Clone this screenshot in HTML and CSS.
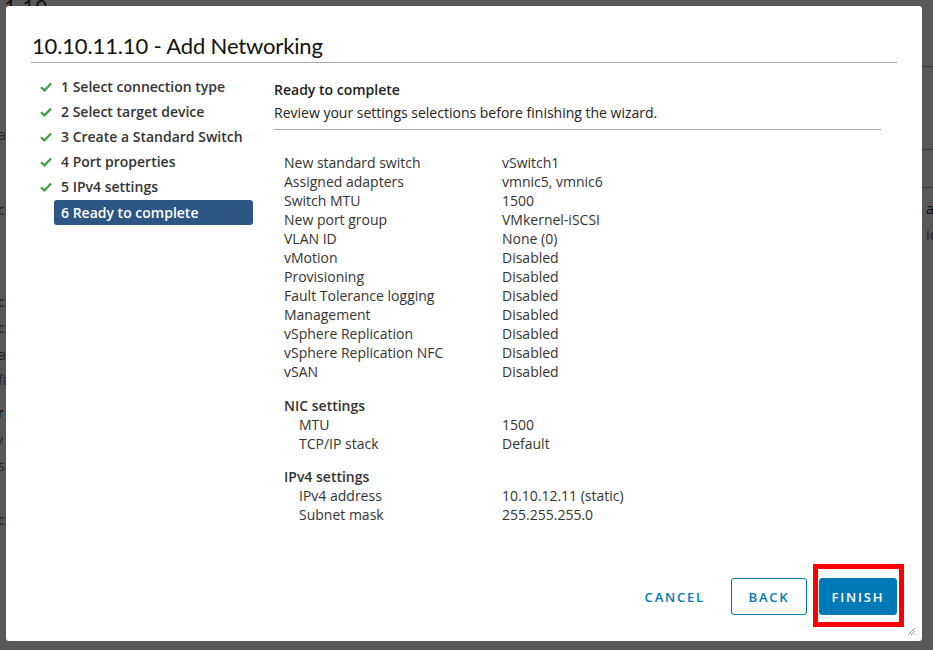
FILE: index.html
```html
<!DOCTYPE html>
<html>
<head>
<meta charset="utf-8">
<link rel="stylesheet" href="styles.css">
</head>
<body>
<div class="page">
  <div class="page-top">1.10</div>
  <div class="page-left">
    <span class="pl" style="top:125px">a</span>
    <span class="pl" style="top:200px">c</span>
    <span class="pl" style="top:292px">c</span>
    <span class="pl" style="top:318px">c</span>
    <span class="pl" style="top:345px">a</span>
    <span class="pl" style="top:370px">fi</span>
    <span class="pl dark" style="top:403px">r</span>
    <span class="pl" style="top:432px">/</span>
    <span class="pl" style="top:456px">s</span>
    <span class="pl" style="top:510px">c</span>
  </div>
  <div class="page-right">
    <div class="pr-line" style="top:66px"></div>
    <div class="pr-line" style="top:149px"></div>
    <div class="pr-line" style="top:187px"></div>
    <span class="pr-text dark" style="top:198px">al</span>
    <span class="pr-text" style="top:224px">ic</span>
  </div>
</div>
<div class="overlay"></div>
<div class="modal">
  <h1 class="title">10.10.11.10 - Add Networking</h1>
  <div class="body">
    <ul class="steps">
      <li class="step done"><svg class="check" viewBox="0 0 12 10"><path d="M1 5.2 L4.4 8.4 L11 1.4" fill="none" stroke="#3c9e3c" stroke-width="2.2"/></svg>1 Select connection type</li>
      <li class="step done"><svg class="check" viewBox="0 0 12 10"><path d="M1 5.2 L4.4 8.4 L11 1.4" fill="none" stroke="#3c9e3c" stroke-width="2.2"/></svg>2 Select target device</li>
      <li class="step done"><svg class="check" viewBox="0 0 12 10"><path d="M1 5.2 L4.4 8.4 L11 1.4" fill="none" stroke="#3c9e3c" stroke-width="2.2"/></svg>3 Create a Standard Switch</li>
      <li class="step done"><svg class="check" viewBox="0 0 12 10"><path d="M1 5.2 L4.4 8.4 L11 1.4" fill="none" stroke="#3c9e3c" stroke-width="2.2"/></svg>4 Port properties</li>
      <li class="step done"><svg class="check" viewBox="0 0 12 10"><path d="M1 5.2 L4.4 8.4 L11 1.4" fill="none" stroke="#3c9e3c" stroke-width="2.2"/></svg>5 IPv4 settings</li>
      <li class="step active">6 Ready to complete</li>
    </ul>
    <div class="content">
      <div class="content-head">
        <div class="heading">Ready to complete</div>
        <div class="desc">Review your settings selections before finishing the wizard.</div>
      </div>
      <div class="summary">
        <div class="row"><span class="k">New standard switch</span><span>vSwitch1</span></div>
        <div class="row"><span class="k">Assigned adapters</span><span>vmnic5, vmnic6</span></div>
        <div class="row"><span class="k">Switch MTU</span><span>1500</span></div>
        <div class="row"><span class="k">New port group</span><span>VMkernel-iSCSI</span></div>
        <div class="row"><span class="k">VLAN ID</span><span>None (0)</span></div>
        <div class="row"><span class="k">vMotion</span><span>Disabled</span></div>
        <div class="row"><span class="k">Provisioning</span><span>Disabled</span></div>
        <div class="row"><span class="k">Fault Tolerance logging</span><span>Disabled</span></div>
        <div class="row"><span class="k">Management</span><span>Disabled</span></div>
        <div class="row"><span class="k">vSphere Replication</span><span>Disabled</span></div>
        <div class="row"><span class="k">vSphere Replication NFC</span><span>Disabled</span></div>
        <div class="row"><span class="k">vSAN</span><span>Disabled</span></div>
        <div class="section">NIC settings</div>
        <div class="row sub"><span class="k">MTU</span><span>1500</span></div>
        <div class="row sub"><span class="k">TCP/IP stack</span><span>Default</span></div>
        <div class="section second">IPv4 settings</div>
        <div class="row sub"><span class="k">IPv4 address</span><span>10.10.12.11 (static)</span></div>
        <div class="row sub"><span class="k">Subnet mask</span><span>255.255.255.0</span></div>
      </div>
    </div>
  </div>
  <div class="footer">
    <button class="btn flat">CANCEL</button>
    <button class="btn outline">BACK</button>
    <span class="highlight"><button class="btn primary">FINISH</button></span>
  </div>
  <svg class="resize" viewBox="0 0 9 9"><path d="M8 1 L1 8 M8 4 L4 8 M8 7 L7 8" stroke="#9a9a9a" stroke-width="1"/></svg>
</div>
</body>
</html>
```

FILE: styles.css
```css
* { box-sizing: border-box; }
html, body { margin: 0; padding: 0; }
body {
  width: 933px;
  height: 650px;
  position: relative;
  overflow: hidden;
  font-family: "Open Sans", "Noto Sans", sans-serif;
  background: #fafafa;
}
.page { position: absolute; inset: 0; background: #f4f4f4; }
.page-top {
  position: absolute; left: 4px; top: -8px;
  font-size: 22px; color: #222;
}
.page-left .pl, .page-right .pr-text {
  position: absolute; font-size: 14px; color: #666;
}
.page-left .pl { left: -2px; }
.page-right .pr-text { left: 926px; font-size: 15px; }
.dark { color: #222 !important; }
.pr-line { position: absolute; left: 922px; width: 11px; height: 1px; background: #aaa; }
.overlay { position: absolute; inset: 0; background: rgba(0,0,0,0.64); }

.modal {
  position: absolute;
  left: 6px; top: 6px;
  width: 916px; height: 635px;
  background: #fff;
  border-radius: 3px;
  display: flex;
  flex-direction: column;
  padding: 0 25px 26px 25px;
  color: #333;
}
.title {
  margin: 0;
  font-family: "Lato", "Open Sans", sans-serif;
  font-weight: 400;
  font-size: 22px;
  letter-spacing: -0.15px;
  line-height: 32px;
  padding: 24px 0 0 1px;
  height: 57px;
  border-bottom: 1px solid #a6a6a6;
  color: #111;
}
.body {
  display: flex;
  gap: 21px;
  padding-top: 11px;
  flex: 1;
}
.steps {
  list-style: none;
  margin: 0; padding: 0;
  width: 222px;
  flex: none;
}
.step {
  height: 25px;
  display: flex;
  align-items: center;
  font-size: 14px;
  font-weight: 600;
  color: #333;
  padding-left: 9px;
}
.check { width: 12px; height: 10px; margin-right: 9px; flex: none; }
.step.active {
  margin-top: 1px;
  margin-left: 23px;
  padding-left: 7px;
  background: #2c5683;
  color: #fff;
  border-radius: 3px;
}
.content { width: 607px; font-size: 14px; }
.content-head {
  padding-top: 6px;
  padding-bottom: 6px;
  border-bottom: 1px solid #a6a6a6;
}
.heading { font-weight: 600; line-height: 20px; color: #222; }
.desc { line-height: 20px; margin-top: 3px; color: #222; }
.summary { padding: 23px 0 0 10px; }
.row { display: flex; line-height: 19px; }
.row .k { width: 218px; flex: none; }
.row.sub .k { padding-left: 15px; }
.section { font-weight: 600; line-height: 19px; margin-top: 15px; }
.section.second { margin-top: 14px; }

.footer {
  display: flex;
  justify-content: flex-end;
  align-items: center;
  gap: 10px;
}
.btn {
  font-family: inherit;
  font-size: 13px;
  font-weight: 600;
  letter-spacing: 1.8px;
  height: 37px;
  padding: 0 15px;
  border-radius: 3px;
  border: 1px solid transparent;
  background: none;
  color: #0079b8;
}
.btn.outline { border-color: #0079b8; width: 76px; }
.btn.primary { background: #0079b8; border-color: #0079b8; color: #fff; width: 78px; display: block; padding: 0; }
.btn.outline { padding: 0; }
.highlight {
  display: block;
  border: 5px solid #ff0000;
  margin: -14px -7px -12px -4px;
  padding: 9px 2px 7px 1px;
}
.resize { position: absolute; right: 6px; bottom: 5px; width: 9px; height: 9px; }
```
